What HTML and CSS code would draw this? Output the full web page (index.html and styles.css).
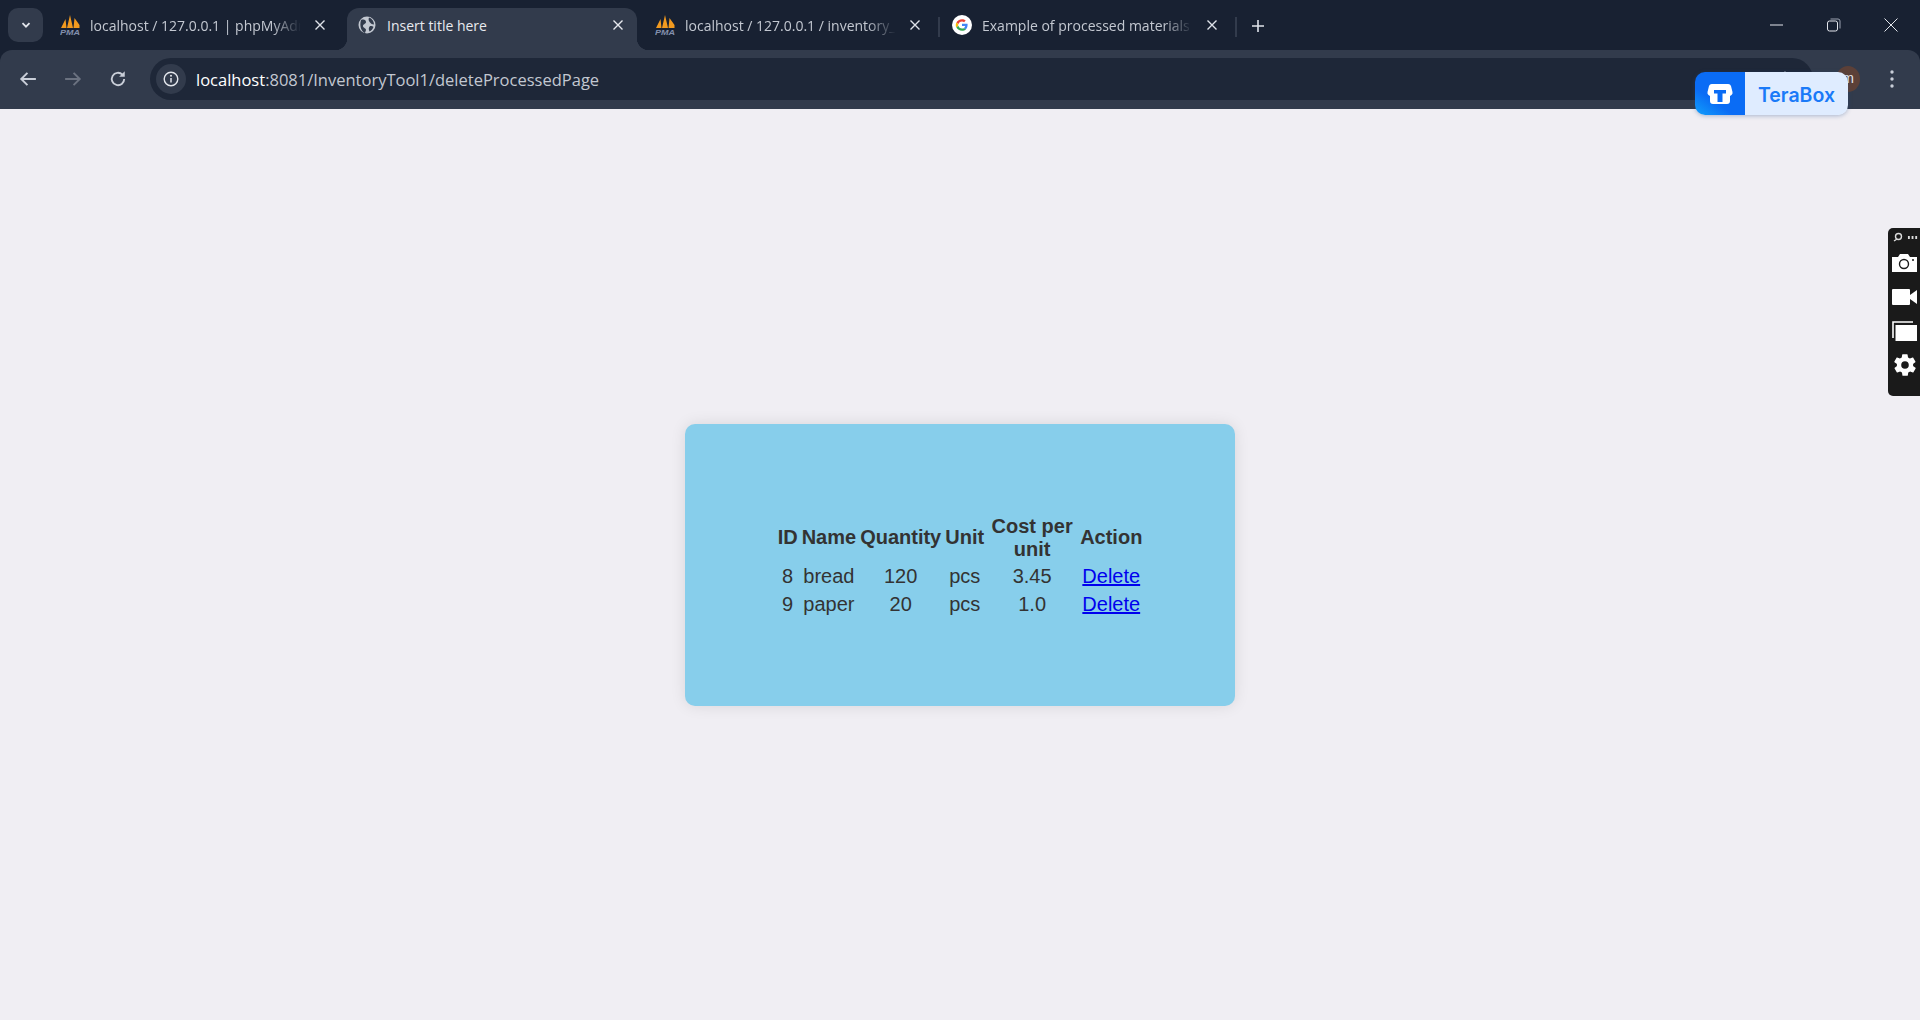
FILE: index.html
```html
<!DOCTYPE html>
<html>
<head>
    <title>Insert title here</title>
    <link rel="stylesheet" href="styles.css">
</head>
<body>
    <div class="chrome">
        <!-- Tab strip -->
        <div class="tabstrip">
            <div class="tab-search">
                <svg width="12" height="12" viewBox="0 0 12 12"><path d="M2.500 4.200 6 7.700l3.500-3.500" fill="none" stroke="#e3e6ec" stroke-width="1.800"/></svg>
            </div>
            <div class="tab">
                <svg class="favicon" viewBox="0 0 20 20"><path d="M1 13 5.500 4l1 9zM7 13 10 0l3 13zM13.500 13l1-10 5 7v3z" fill="#f29a1f"/><text class="pma" x="0" y="19.500" textLength="20" lengthAdjust="spacingAndGlyphs">PMA</text></svg>
                <span class="tab-title">localhost / 127.0.0.1 | phpMyAdmin</span>
                <svg class="tab-close" viewBox="0 0 10 10"><path d="M.5.500l9 9M9.500.500l-9 9" stroke="#dfe3ea" stroke-width="1.400"/></svg>
            </div>
            <div class="tab active">
                <svg class="favicon" viewBox="0 0 20 20"><circle cx="10" cy="10" r="8.500" fill="#c3c8d1"/><path d="M4 5c3-1 5 0 5 2s-3 2-3 4 3 2 3 4l-1 3C5 17 2 12 4 5zM12 2.500c3 1 5 4 5 7-2 0-3-1-4-2s-2-3-1-5zM13 11c2 0 3 0 3.500 1-1 2-2 4-4 4.500-1-2-1-4 .5-5.500z" fill="#323b4c"/></svg>
                <span class="tab-title">Insert title here</span>
                <svg class="tab-close" viewBox="0 0 10 10"><path d="M.5.500l9 9M9.500.500l-9 9" stroke="#e8eaef" stroke-width="1.400"/></svg>
            </div>
            <div class="tab">
                <svg class="favicon" viewBox="0 0 20 20"><path d="M1 13 5.500 4l1 9zM7 13 10 0l3 13zM13.500 13l1-10 5 7v3z" fill="#f29a1f"/><text class="pma" x="0" y="19.500" textLength="20" lengthAdjust="spacingAndGlyphs">PMA</text></svg>
                <span class="tab-title">localhost / 127.0.0.1 / inventory_db</span>
                <svg class="tab-close" viewBox="0 0 10 10"><path d="M.5.500l9 9M9.500.500l-9 9" stroke="#dfe3ea" stroke-width="1.400"/></svg>
            </div>
            <div class="tab-sep"></div>
            <div class="tab">
                <svg class="favicon" viewBox="0 0 20 20">
                    <circle cx="10" cy="10" r="10" fill="#fff"/>
                    <path d="M10 4.200c1.500 0 2.700.5 3.700 1.400l-1.600 1.600c-.6-.5-1.300-.8-2.100-.8-1.800 0-3.200 1.200-3.700 2.800L4.400 7.400C5.400 5.500 7.500 4.200 10 4.200z" fill="#ea4335"/>
                    <path d="M4.400 7.400l1.900 1.800c-.2.500-.2 1.100 0 1.600l-1.900 1.800c-.9-1.600-.9-3.600 0-5.200z" fill="#fbbc05"/>
                    <path d="M4.400 12.600l1.900-1.800c.5 1.600 1.900 2.800 3.700 2.800.9 0 1.600-.2 2.200-.6l1.800 1.400c-1 .9-2.400 1.400-4 1.400-2.500 0-4.600-1.300-5.600-3.200z" fill="#34a853"/>
                    <path d="M15.600 10c0-.4 0-.8-.1-1.200H10v2.300h3.200c-.1.700-.6 1.400-1.200 1.900l1.800 1.400c1.100-1 1.800-2.500 1.800-4.400z" fill="#4285f4"/>
                </svg>
                <span class="tab-title">Example of processed materials - Google Search</span>
                <svg class="tab-close" viewBox="0 0 10 10"><path d="M.5.500l9 9M9.500.500l-9 9" stroke="#dfe3ea" stroke-width="1.400"/></svg>
            </div>
            <div class="tab-sep"></div>
            <div class="tab-new">
                <svg width="14" height="14" viewBox="0 0 14 14"><path d="M7 1v12M1 7h12" stroke="#dfe3ea" stroke-width="1.600"/></svg>
            </div>
            <div class="win-controls">
                <svg width="14" height="14" viewBox="0 0 14 14"><path d="M0 7h13" stroke="#e3e6ec" stroke-width="1"/></svg>
                <svg width="14" height="14" viewBox="0 0 14 14"><rect x=".5" y="3" width="10" height="10" rx="2" fill="none" stroke="#e3e6ec"/><path d="M3.500 1h7.500a2 2 0 0 1 2 2v7.500" fill="none" stroke="#9aa2b0"/></svg>
                <svg width="14" height="14" viewBox="0 0 14 14"><path d="M.5.500l13 13M13.500.500l-13 13" stroke="#e3e6ec" stroke-width="1"/></svg>
            </div>
        </div>

        <!-- Address bar -->
        <div class="toolbar">
            <svg class="nav-icon" viewBox="0 0 16 16"><path d="M15 8H2M7.500 2.500 2 8l5.500 5.500" fill="none" stroke="#c9ced8" stroke-width="1.700"/></svg>
            <svg class="nav-icon" viewBox="0 0 16 16"><path d="M1 8h13M8.500 2.500 14 8l-5.500 5.500" fill="none" stroke="#6b7280" stroke-width="1.700"/></svg>
            <svg class="nav-icon" viewBox="0 0 16 16"><path d="M13.500 8a5.500 5.500 0 1 1-1.600-3.900" fill="none" stroke="#c9ced8" stroke-width="1.700"/><path d="M14 1v5H9z" fill="#c9ced8"/></svg>
            <div class="omnibox">
                <div class="site-info">
                    <svg width="16" height="16" viewBox="0 0 16 16"><circle cx="8" cy="8" r="6.800" fill="none" stroke="#e3e6ec" stroke-width="1.400"/><path d="M8 7v4.500" stroke="#e3e6ec" stroke-width="1.500"/><circle cx="8" cy="4.800" r="1" fill="#e3e6ec"/></svg>
                </div>
                <span class="url"><span class="url-host">localhost</span>:8081/InventoryTool1/deleteProcessedPage</span>
                <svg class="star" width="16" height="16" viewBox="0 0 16 16"><path d="M8 1.500l2 4.500 4.800.5-3.600 3.200 1 4.800L8 12l-4.200 2.500 1-4.800L1.200 6.500 6 6z" fill="none" stroke="#c9ced8" stroke-width="1.400"/></svg>
            </div>
            <div class="avatar">m</div>
            <svg class="menu-icon" width="4" height="18" viewBox="0 0 4 18"><circle cx="2" cy="2" r="1.700" fill="#c9ced8"/><circle cx="2" cy="9" r="1.700" fill="#c9ced8"/><circle cx="2" cy="16" r="1.700" fill="#c9ced8"/></svg>
        </div>
    </div>

    <!-- Page -->
    <div class="page">
        <div class="card">
            <table>
                <tr>
                    <th>ID</th>
                    <th>Name</th>
                    <th>Quantity</th>
                    <th>Unit</th>
                    <th class="cost">Cost per unit</th>
                    <th>Action</th>
                </tr>
                <tr>
                    <td>8</td>
                    <td>bread</td>
                    <td>120</td>
                    <td>pcs</td>
                    <td>3.45</td>
                    <td><a href="#">Delete</a></td>
                </tr>
                <tr>
                    <td>9</td>
                    <td>paper</td>
                    <td>20</td>
                    <td>pcs</td>
                    <td>1.0</td>
                    <td><a href="#">Delete</a></td>
                </tr>
            </table>
        </div>
    </div>

    <!-- Floating extension widgets -->
    <div class="terabox">
        <div class="terabox-logo">
            <svg width="26" height="22" viewBox="0 0 26 22"><path d="M5 1h16a3 3 0 0 1 3 2l1.500 6a3 3 0 0 1-1 3l-1.500 1v5a3 3 0 0 1-3 3H6a3 3 0 0 1-3-3v-5l-1.500-1a3 3 0 0 1-1-3L2 3a3 3 0 0 1 3-2z" fill="#fff"/><path d="M7 7h12v3.500h-3.500V19h-5v-8.500H7z" fill="#0a6cf5"/></svg>
        </div>
        <div class="terabox-label">TeraBox</div>
    </div>

    <div class="capture-bar">
        <div class="capture-top">
            <svg width="10" height="10" viewBox="0 0 10 10"><circle cx="5.500" cy="4.500" r="3" fill="none" stroke="#ddd" stroke-width="1.400"/><path d="M1 9l3-2" stroke="#ddd" stroke-width="1.400"/></svg>
            <span class="capture-dots"></span>
        </div>
        <div class="capture-slot">
            <svg width="25" height="18" viewBox="0 0 25 18"><path d="M0 3h6l2-3h8l2 3h7v15H0z" fill="#fff"/><circle cx="12" cy="10" r="4.500" fill="none" stroke="#1a1a1a" stroke-width="1.400"/><circle cx="21" cy="6" r="1" fill="#1a1a1a"/></svg>
        </div>
        <div class="capture-slot">
            <svg width="25" height="16" viewBox="0 0 25 16"><rect x="0" y="0" width="18" height="16" rx="1" fill="#fff"/><path d="M18 6l7-5v14l-7-5z" fill="#fff"/></svg>
        </div>
        <div class="capture-slot">
            <svg width="25" height="20" viewBox="0 0 25 20"><path d="M1 17V1h20" fill="none" stroke="#fff" stroke-width="1.600"/><rect x="3.500" y="4" width="21.500" height="16" fill="#fff"/></svg>
        </div>
        <div class="capture-slot">
            <svg width="26" height="26" viewBox="0 0 24 24"><path fill="#fff" d="M19.400 13c.1-.3.100-.7.100-1s0-.7-.1-1l2.100-1.600c.2-.2.200-.4.100-.6l-2-3.500c-.1-.2-.4-.3-.6-.2l-2.500 1c-.5-.4-1.100-.7-1.700-1l-.4-2.600c0-.3-.2-.5-.5-.5h-4c-.3 0-.5.200-.5.500l-.4 2.600c-.6.300-1.200.6-1.700 1l-2.500-1c-.2-.1-.5 0-.6.200l-2 3.500c-.1.200-.1.500.1.600L4.600 11c-.1.300-.1.700-.1 1s0 .7.100 1l-2.100 1.600c-.2.200-.2.400-.1.600l2 3.500c.1.200.4.300.6.200l2.500-1c.5.400 1.100.7 1.700 1l.4 2.600c0 .3.200.5.500.5h4c.3 0 .5-.2.500-.5l.4-2.600c.6-.3 1.200-.6 1.700-1l2.500 1c.2.100.5 0 .6-.2l2-3.500c.1-.2.100-.5-.1-.6zM12 15.500a3.500 3.500 0 1 1 0-7 3.500 3.500 0 0 1 0 7z"/></svg>
        </div>
    </div>
</body>
</html>
```

FILE: styles.css
```css
body {
    font-family: "Liberation Sans", Arial, sans-serif;
    background-color: #f0eef3;
    margin: 0;
    padding: 0;
    height: 1020px;
    display: flex;
    flex-direction: column;
    overflow: hidden;
}
.chrome {
    flex: none;
    background-color: #182132;
}

/* Tab strip */
.tabstrip {
    height: 50px;
    display: flex;
    align-items: flex-end;
    padding-left: 8px;
    font-family: "Open Sans", sans-serif;
    font-size: 14px;
    color: #c3c8d1;
}
.tab-search {
    width: 35px;
    height: 34px;
    margin: 0 7px 8px 0;
    flex: none;
    display: flex;
    align-items: center;
    justify-content: center;
    background-color: #323b4c;
    border-radius: 10px;
}
.tab {
    position: relative;
    width: 297px;
    height: 42px;
    flex: none;
    box-sizing: border-box;
    display: flex;
    align-items: center;
    padding: 0 22px 8px 10px;
    gap: 10px;
    border-radius: 12px 12px 0 0;
}
.tab.active {
    width: 290px;
    margin-right: 8px;
    padding-right: 14px;
    background-color: #323b4c;
    color: #e8eaef;
}
.tab.active::before,
.tab.active::after {
    content: "";
    position: absolute;
    bottom: 0;
    width: 12px;
    height: 12px;
}
.tab.active::before {
    left: -12px;
    background: radial-gradient(circle at 0 0, transparent 12px, #323b4c 12.500px);
}
.tab.active::after {
    right: -12px;
    background: radial-gradient(circle at 100% 0, transparent 12px, #323b4c 12.500px);
}
.favicon {
    width: 20px;
    height: 20px;
    flex: none;
}
.pma {
    font-family: "Liberation Sans", sans-serif;
    font-size: 8px;
    font-weight: bold;
    font-style: italic;
    fill: #8390ad;
}
.tab-title {
    flex: 1;
    margin-right: 4px;
    white-space: nowrap;
    overflow: hidden;
    -webkit-mask-image: linear-gradient(to right, #000 86%, transparent 100%);
    mask-image: linear-gradient(to right, #000 86%, transparent 100%);
}
.tab.active .tab-title {
    -webkit-mask-image: none;
    mask-image: none;
}
.tab-close {
    width: 10px;
    height: 10px;
    flex: none;
}
.tab-sep {
    width: 2px;
    height: 20px;
    margin: 0 2px 13px -4px;
    flex: none;
    background-color: #323b4c;
}
.tab-new {
    margin: 0 0 18px 12px;
    height: 14px;
    flex: none;
}
.win-controls {
    margin-left: auto;
    margin-bottom: 18px;
    display: flex;
    gap: 43px;
    padding-right: 22px;
    height: 14px;
}

/* Toolbar */
.toolbar {
    height: 59px;
    box-sizing: border-box;
    display: flex;
    align-items: center;
    padding: 0 26px 1px 19px;
    background-color: #323b4c;
    border-radius: 12px 12px 0 0;
}
.nav-icon {
    width: 18px;
    height: 18px;
    margin-right: 27px;
    flex: none;
}
.nav-icon:nth-of-type(3) {
    margin-right: 23px;
}
.omnibox {
    flex: 1;
    height: 42px;
    display: flex;
    align-items: center;
    background-color: #1e2738;
    border-radius: 21px;
    padding: 0 20px 0 6px;
}
.site-info {
    width: 30px;
    height: 30px;
    display: flex;
    align-items: center;
    justify-content: center;
    background-color: #323b4c;
    border-radius: 50%;
    margin-right: 10px;
}
.url {
    font-family: "Open Sans", sans-serif;
    font-size: 16.500px;
    color: #c3c8d1;
}
.url-host {
    color: #fff;
}
.star {
    margin-left: auto;
}
.avatar {
    width: 24px;
    height: 26px;
    margin: 0 30px 0 23px;
    border-radius: 50%;
    background-color: #5c4038;
    color: #e3e6ec;
    font-size: 14px;
    line-height: 24px;
    text-align: center;
    flex: none;
}
.menu-icon {
    flex: none;
}

/* Page content */
.page {
    flex: 1;
    display: flex;
    align-items: center;
    justify-content: center;
}
.card {
    width: 550px;
    height: 282px;
    box-sizing: border-box;
    padding-top: 2px;
    display: flex;
    align-items: center;
    justify-content: center;
    background-color: #87ceeb;
    border-radius: 10px;
    box-shadow: 0 0 15px rgba(0, 0, 0, 0.1);
    font-size: 20px;
    color: #333;
}
.cost {
    width: 88px;
}
td {
    text-align: center;
    padding: 1px 1px 2px;
}

/* Overlays */
.terabox {
    position: absolute;
    left: 1695px;
    top: 72px;
    width: 153px;
    height: 43px;
    display: flex;
    border-radius: 10px;
    overflow: hidden;
    box-shadow: 0 1px 4px rgba(40, 80, 140, 0.35);
}
.terabox-logo {
    width: 50px;
    display: flex;
    align-items: center;
    justify-content: center;
    background: linear-gradient(35deg, #12a0fb 0%, #0a6cf5 35%);
}
.terabox-label {
    flex: 1;
    background-color: #dfecff;
    color: #1a7af8;
    font-family: "Inter", sans-serif;
    font-weight: 600;
    font-size: 19.500px;
    line-height: 46px;
    text-align: center;
}
.capture-bar {
    position: absolute;
    right: 0;
    top: 228px;
    width: 32px;
    height: 168px;
    box-sizing: border-box;
    padding-left: 4px;
    display: flex;
    flex-direction: column;
    background-color: #1a1a1a;
    border-radius: 5px 0 0 5px;
    overflow: hidden;
}
.capture-top {
    display: flex;
    align-items: center;
    gap: 4px;
    height: 18px;
    padding-left: 1px;
}
.capture-dots {
    width: 11px;
    height: 3px;
    background-image: radial-gradient(circle, #ddd 1.200px, transparent 1.300px);
    background-size: 3.700px 3px;
}
.capture-slot {
    height: 34px;
    flex: none;
    display: flex;
    align-items: center;
}
```
